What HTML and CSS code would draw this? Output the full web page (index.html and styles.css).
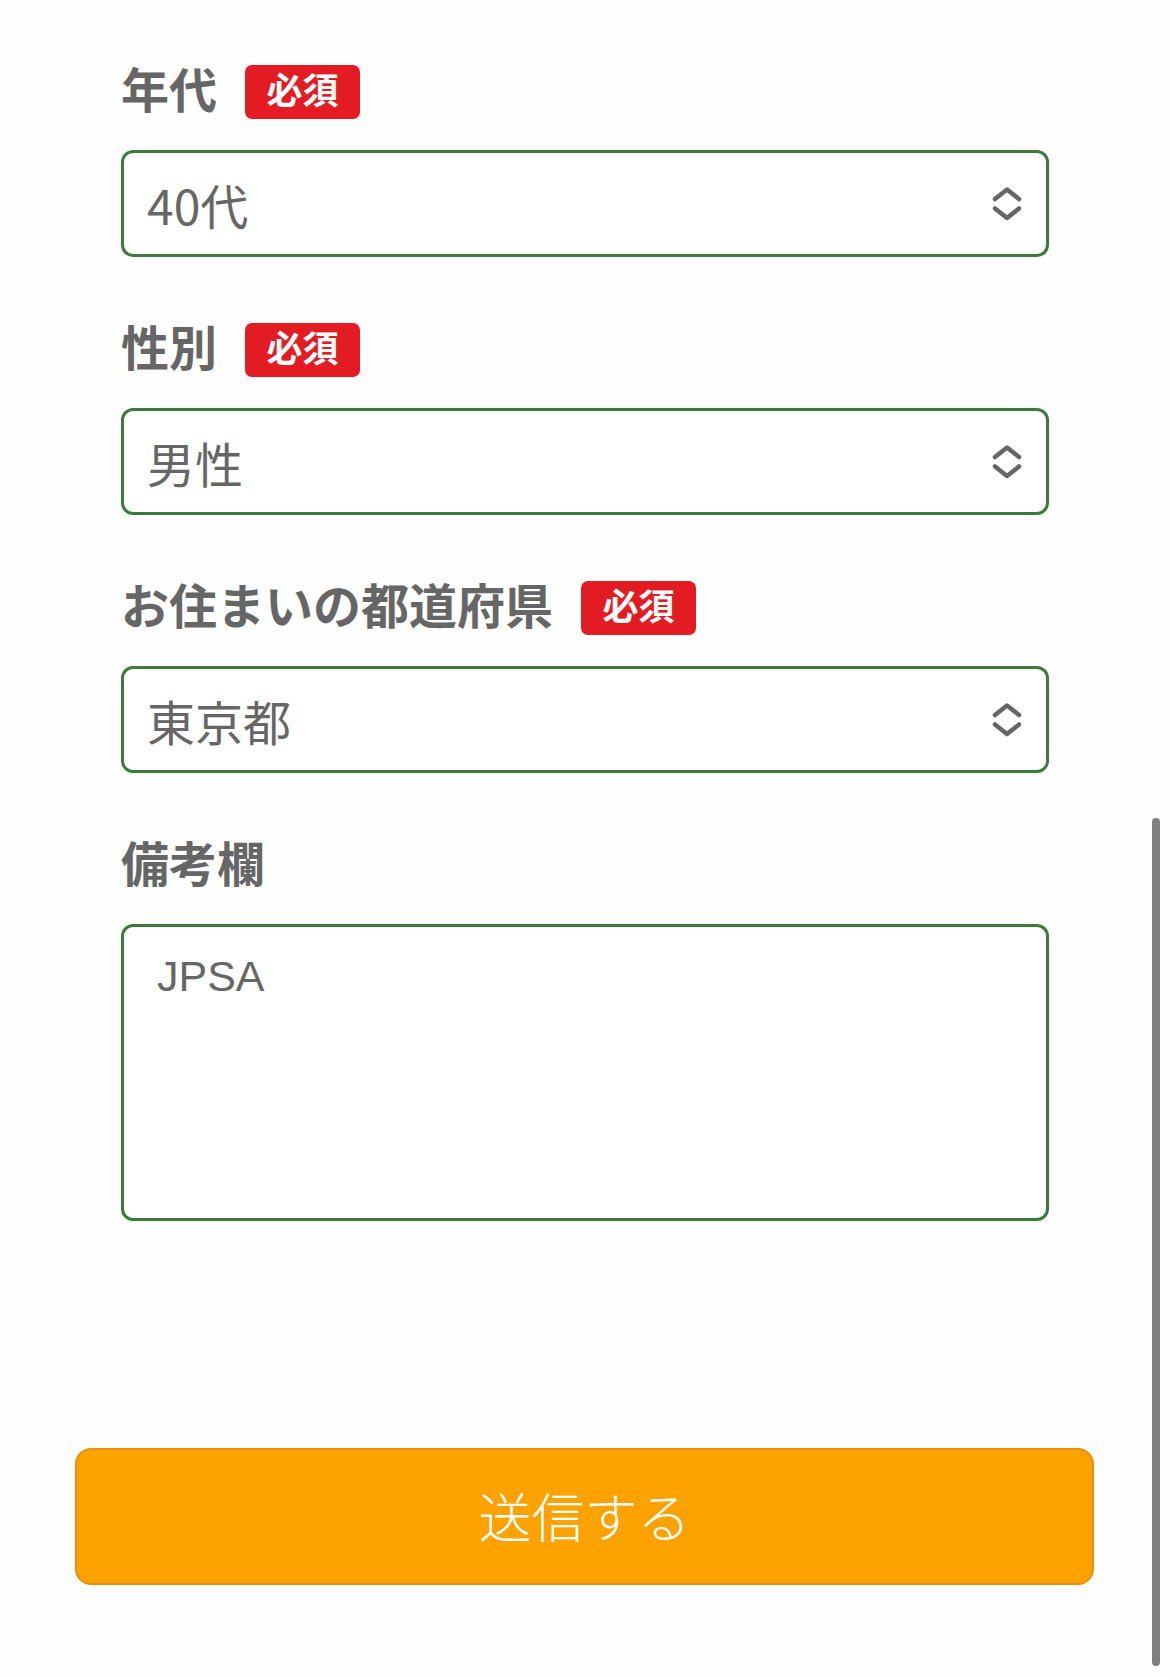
FILE: index.html
```html
<!DOCTYPE html>
<html lang="ja">
<head>
  <meta charset="UTF-8" />
  <meta name="viewport" content="width=device-width, initial-scale=1" />
  <title>お問い合わせ</title>
  <link rel="stylesheet" href="styles.css">
</head>
<body>

  <form class="form">

    <!-- 年代 -->
    <div class="field">
      <div class="field-head">
        <label class="field-label" for="age">年代</label>
        <span class="badge">必須</span>
      </div>
      <div class="select-box">
        <select id="age" class="select">
          <option>40代</option>
        </select>
        <svg class="chevron" width="30" height="34" viewBox="0 0 30 34">
          <polyline points="3,12 15,2.5 27,12" />
          <polyline points="3,21.5 15,31 27,21.5" />
        </svg>
      </div>
    </div>

    <!-- 性別 -->
    <div class="field">
      <div class="field-head">
        <label class="field-label" for="gender">性別</label>
        <span class="badge">必須</span>
      </div>
      <div class="select-box">
        <select id="gender" class="select">
          <option>男性</option>
        </select>
        <svg class="chevron" width="30" height="34" viewBox="0 0 30 34">
          <polyline points="3,12 15,2.5 27,12" />
          <polyline points="3,21.5 15,31 27,21.5" />
        </svg>
      </div>
    </div>

    <!-- 都道府県 -->
    <div class="field">
      <div class="field-head">
        <label class="field-label" for="pref">お住まいの都道府県</label>
        <span class="badge">必須</span>
      </div>
      <div class="select-box">
        <select id="pref" class="select">
          <option>東京都</option>
        </select>
        <svg class="chevron" width="30" height="34" viewBox="0 0 30 34">
          <polyline points="3,12 15,2.5 27,12" />
          <polyline points="3,21.5 15,31 27,21.5" />
        </svg>
      </div>
    </div>

    <!-- 備考欄 -->
    <div class="field">
      <div class="field-head">
        <label class="field-label" for="note">備考欄</label>
      </div>
      <textarea id="note" class="textarea" placeholder="JPSA"></textarea>
    </div>

    <button type="button" class="submit">送信する</button>
  </form>

  <div class="scrollbar"></div>

</body>
</html>
```

FILE: styles.css
```css
body {
  margin: 0;
  background: #fefefe;
  font-family: "Noto Sans CJK JP", "Noto Sans", sans-serif;
  color: #666666;
}

.form {
  width: 928px;
  margin: 0 auto;
  padding-top: 65px;
  padding-bottom: 92px;
}

.field {
  margin-bottom: 66px;
}

.field-head {
  display: flex;
  align-items: center;
  height: 54px;
  margin-bottom: 31px;
}

.field-label {
  font-size: 48px;
  font-weight: bold;
  line-height: 54px;
  padding-bottom: 10px;
  color: #666666;
}

.badge {
  margin-left: 28px;
  width: 115px;
  height: 54px;
  box-sizing: border-box;
  padding-bottom: 8px;
  border-radius: 7px;
  background: #e31c24;
  color: #ffffff;
  font-size: 36px;
  font-weight: bold;
  line-height: 46px;
  text-align: center;
}

.select-box {
  display: flex;
  align-items: center;
  height: 107px;
  box-sizing: border-box;
  border: 3px solid #3e7a3a;
  border-radius: 12px;
  padding: 0 24px 0 23px;
  background: #ffffff;
}

.select {
  flex: 1;
  appearance: none;
  -webkit-appearance: none;
  border: none;
  background: transparent;
  padding: 0;
  font-family: inherit;
  font-size: 48px;
  color: #666666;
  outline: none;
}

.chevron {
  fill: none;
  stroke: #666666;
  stroke-width: 4.5;
  stroke-linecap: round;
  stroke-linejoin: round;
}

.textarea {
  display: block;
  width: 100%;
  height: 297px;
  box-sizing: border-box;
  border: 3px solid #3e7a3a;
  border-radius: 12px;
  padding: 18px 33px;
  font-family: "Liberation Sans", "Noto Sans CJK JP", sans-serif;
  font-size: 43px;
  line-height: 1.45;
  color: #666666;
  resize: none;
  background: #ffffff;
}

.textarea::placeholder {
  color: #666666;
  opacity: 1;
}

.submit {
  display: block;
  width: 1019px;
  height: 137px;
  margin: 227px 0 0 -46px;
  padding-bottom: 5px;
  border: 2px solid #e8900b;
  border-radius: 16px;
  background: #fea200;
  color: #ffffff;
  font-family: inherit;
  font-size: 53px;
  font-weight: 300;
  cursor: pointer;
}

.scrollbar {
  position: fixed;
  top: 818px;
  right: 10px;
  width: 8px;
  height: 848px;
  border-radius: 4px;
  background: #808080;
}
```
